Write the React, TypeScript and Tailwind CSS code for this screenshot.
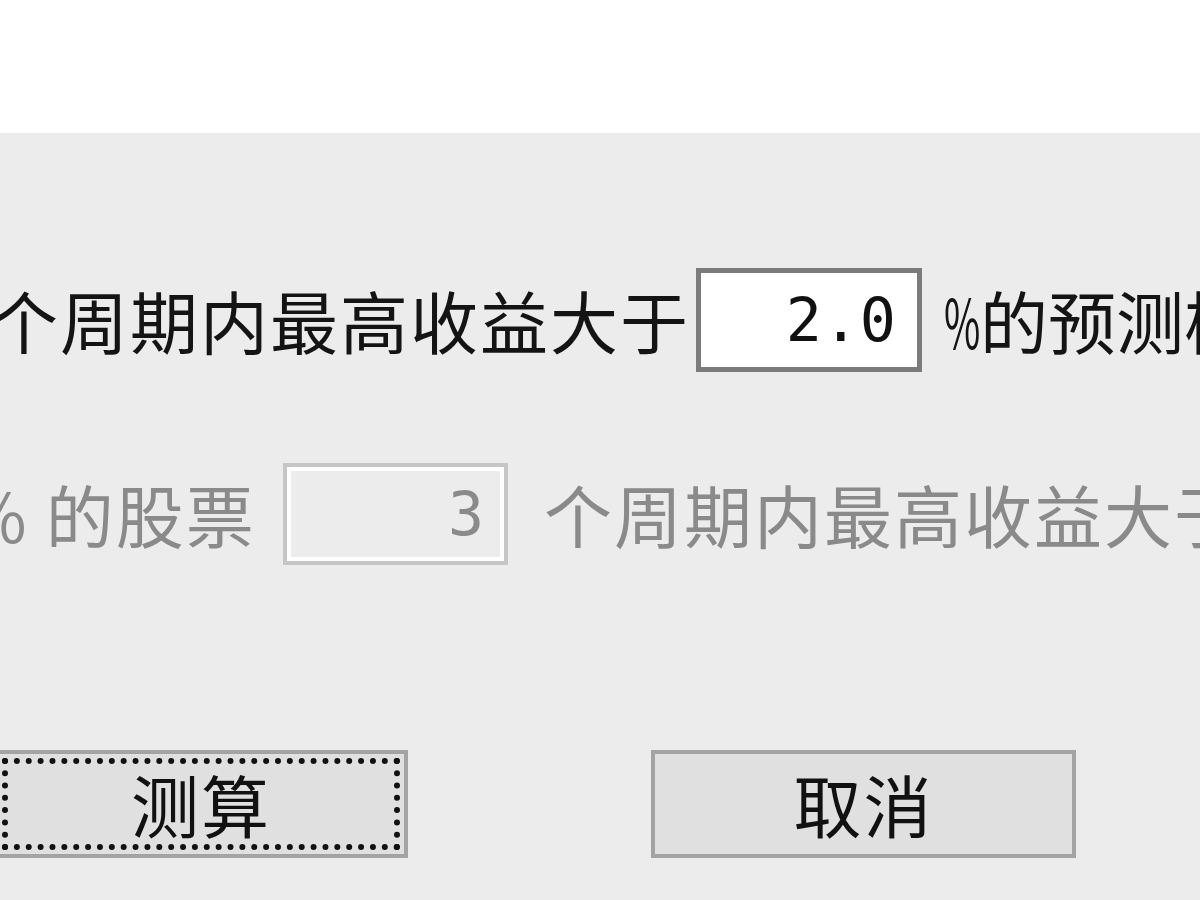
import React from 'react'

const cjk = { fontFamily: '"Noto Sans CJK SC", "Noto Sans", sans-serif' }
const mono = { fontFamily: '"DejaVu Sans Mono", "Liberation Mono", monospace' }

function Field({ value, disabled }: { value: string; disabled?: boolean }) {
  if (disabled) {
    return (
      <div className="w-[225px] h-[102px] border-[4px] border-[#c6c6c6] shrink-0">
        <div className="w-full h-full border-[4px] border-white bg-[#ececec] flex items-center justify-end pr-[16px]">
          <span style={mono} className="text-[60px] leading-none text-[#8a8a8a]">
            {value}
          </span>
        </div>
      </div>
    )
  }
  return (
    <div className="w-[226px] h-[104px] border-[5px] border-[#7b7b7b] bg-white flex items-center justify-end pr-[20px] shrink-0">
      <span style={mono} className="text-[60px] leading-none tracking-[1px] text-[#111]">
        {value}
      </span>
    </div>
  )
}

function Button({ label, focused, className }: { label: string; focused?: boolean; className?: string }) {
  return (
    <div
      className={`h-[108px] border-[4px] border-[#a3a3a3] bg-[#e0e0e0] p-[4px] shrink-0 ${className ?? ''}`}
    >
      <div
        className={`w-full h-full flex items-center justify-center ${
          focused ? 'border-[6px] border-dotted border-[#111]' : ''
        }`}
      >
        <span style={cjk} className="text-[68px] leading-none tracking-[2px] text-[#111]">
          {label}
        </span>
      </div>
    </div>
  )
}

export default function App() {
  return (
    <div className="w-[1200px] h-[900px] overflow-hidden bg-white" style={cjk}>
      <div className="h-[133px] bg-white" />
      <div className="h-[767px] bg-[#ececec] flex flex-col pt-[135px]">
        {/* 周期收益条件 */}
        <div className="flex items-center h-[104px] ml-[-10px] whitespace-nowrap">
          <span className="text-[68px] leading-none tracking-[2px] text-[#141414] w-[706px] shrink-0">
            个周期内最高收益大于
          </span>
          <Field value="2.0" />
          <span className="flex items-center text-[68px] leading-none text-[#141414] ml-[22px]">
            <span className="inline-block w-[36px] origin-left scale-x-[0.58]">%</span>
            <span>的预测样本</span>
          </span>
        </div>

        {/* 股票条件（禁用） */}
        <div className="flex items-center h-[102px] mt-[91px] ml-[-36px] whitespace-nowrap">
          <span className="text-[68px] leading-none tracking-[2px] text-[#8a8a8a] w-[319px] shrink-0">
            % 的股票
          </span>
          <Field value="3" disabled />
          <span className="text-[68px] leading-none tracking-[2px] text-[#8a8a8a] ml-[36px]">
            个周期内最高收益大于
          </span>
        </div>

        <div className="flex items-center mt-[185px] ml-[-6px]">
          <Button label="测算" focused className="w-[414px]" />
          <Button label="取消" className="w-[425px] ml-[243px]" />
        </div>
      </div>
    </div>
  )
}
